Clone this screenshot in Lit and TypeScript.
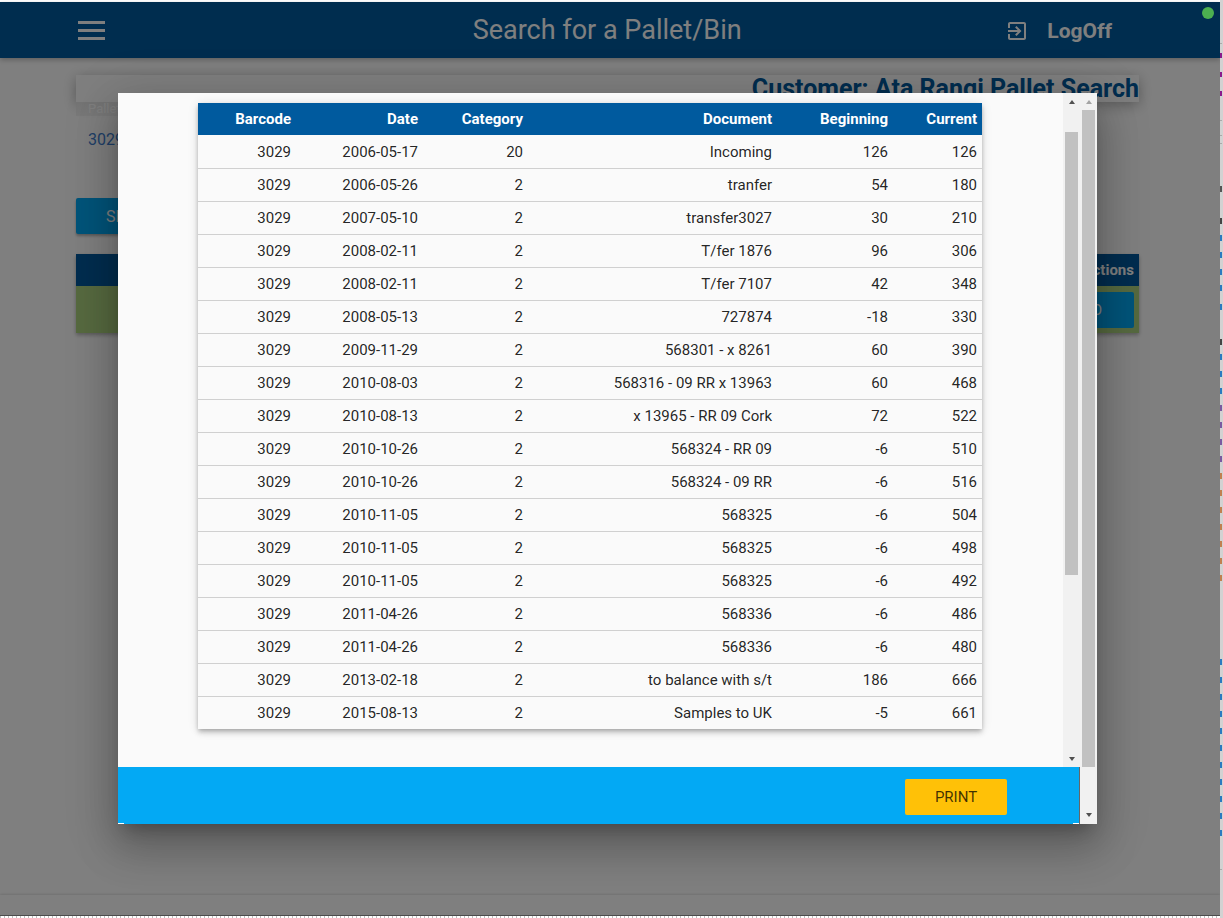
import { LitElement, html, css, svg } from "lit";
import { customElement } from "lit/decorators.js";

const ROWS: [string, string, string, string, string, string][] = [
  ["3029", "2006-05-17", "20", "Incoming", "126", "126"],
  ["3029", "2006-05-26", "2", "tranfer", "54", "180"],
  ["3029", "2007-05-10", "2", "transfer3027", "30", "210"],
  ["3029", "2008-02-11", "2", "T/fer 1876", "96", "306"],
  ["3029", "2008-02-11", "2", "T/fer 7107", "42", "348"],
  ["3029", "2008-05-13", "2", "727874", "-18", "330"],
  ["3029", "2009-11-29", "2", "568301 - x 8261", "60", "390"],
  ["3029", "2010-08-03", "2", "568316 - 09 RR x 13963", "60", "468"],
  ["3029", "2010-08-13", "2", "x 13965 - RR 09 Cork", "72", "522"],
  ["3029", "2010-10-26", "2", "568324 - RR 09", "-6", "510"],
  ["3029", "2010-10-26", "2", "568324 - 09 RR", "-6", "516"],
  ["3029", "2010-11-05", "2", "568325", "-6", "504"],
  ["3029", "2010-11-05", "2", "568325", "-6", "498"],
  ["3029", "2010-11-05", "2", "568325", "-6", "492"],
  ["3029", "2011-04-26", "2", "568336", "-6", "486"],
  ["3029", "2011-04-26", "2", "568336", "-6", "480"],
  ["3029", "2013-02-18", "2", "to balance with s/t", "186", "666"],
  ["3029", "2015-08-13", "2", "Samples to UK", "-5", "661"],
];
const HEAD = ["Barcode", "Date", "Category", "Document", "Beginning", "Current"];

const MARKS: [number, number, string][] = [
  [53, 5, "#8a1a8a"], [72, 5, "#8a1a8a"], [91, 5, "#8a1a8a"], [43, 1, "#aaaaaa"],
  [120, 1, "#aaaaaa"], [135, 1, "#aaaaaa"], [143, 1, "#aaaaaa"], [186, 6, "#555555"],
  [218, 6, "#444444"], [235, 6, "#2a7ac0"], [252, 6, "#2a7ac0"], [269, 6, "#2a7ac0"],
  [285, 6, "#2a7ac0"], [304, 6, "#2a7ac0"], [339, 6, "#444444"], [354, 6, "#2a7ac0"],
  [371, 6, "#2a7ac0"], [388, 6, "#2a7ac0"], [405, 6, "#7a5aa0"], [422, 6, "#7a5aa0"],
  [439, 6, "#7a5aa0"], [456, 6, "#7a5aa0"], [473, 6, "#c08050"], [490, 6, "#c08050"],
  [507, 6, "#c08050"], [524, 6, "#c08050"], [541, 6, "#c08050"], [558, 6, "#c08050"],
  [575, 6, "#c08050"], [659, 6, "#2a7ac0"], [677, 6, "#2a7ac0"], [694, 6, "#2a7ac0"],
  [711, 6, "#2a7ac0"], [728, 6, "#2a7ac0"], [745, 6, "#2a7ac0"], [762, 6, "#2a7ac0"],
  [779, 6, "#2a7ac0"], [796, 6, "#2a7ac0"], [813, 6, "#2a7ac0"], [830, 6, "#2a7ac0"],
  [869, 1, "#aaaaaa"],
];

const exitIcon = svg`<path d="M10.09 15.59L11.5 17l5-5-5-5-1.41 1.41L12.67 11H3v2h9.67l-2.58 2.59zM19 3H5c-1.11 0-2 .9-2 2v4h2V5h14v14H5v-4H3v4c0 1.1.89 2 2 2h14c1.1 0 2-.9 2-2V5c0-1.1-.9-2-2-2z"/>`;

@customElement("app-root")
export class AppRoot extends LitElement {
  static styles = css`
    :host {
      display: block;
      position: relative;
      height: 918px;
      overflow: hidden;
      background: #fff;
      font-family: Roboto, "Liberation Sans", sans-serif;
    }
    .page {
      width: 1220px;
      height: 918px;
      padding-top: 2px;
      box-sizing: border-box;
      display: flex;
      flex-direction: column;
      background: #fff;
    }
    .topbar {
      height: 56px;
      flex: none;
      background: #005a9e;
      color: #fff;
      display: flex;
      align-items: center;
      padding: 0 108px 0 78px;
      box-shadow: 0 2px 5px rgba(0, 0, 0, 0.25);
    }
    .burger {
      width: 27px;
      display: flex;
      flex-direction: column;
      gap: 5px;
    }
    .burger i {
      display: block;
      height: 3px;
      background: #fff;
    }
    .title {
      flex: 1;
      text-align: center;
      font-size: 27px;
      padding-left: 104px;
    }
    .logoff {
      display: flex;
      align-items: center;
      gap: 18px;
      font-size: 21px;
      font-weight: 700;
      padding-top: 1px;
    }
    .logoff svg {
      width: 24px;
      height: 24px;
      fill: #fff;
      display: block;
    }
    .content {
      flex: 1;
      padding: 17px 81px 0 76px;
    }
    .searchbar {
      height: 27px;
      background: #ffffff;
      box-shadow: 0 3px 14px rgba(0, 0, 0, 0.3);
      display: flex;
      justify-content: flex-end;
      align-items: center;
      font-size: 25px;
      font-weight: 700;
      color: #005a9e;
      white-space: nowrap;
    }
    .plabel {
      width: 60px;
      font-size: 13px;
      color: #fff;
      padding: 0 0 0 12px;
      line-height: 14px;
      background: linear-gradient(#e8e8e8, #f2f2f2);
    }
    .pval {
      font-size: 16px;
      color: #3f7fd0;
      padding: 0 12px;
      margin-top: 14px;
      line-height: 19px;
    }
    .showbtn {
      margin-top: 49px;
      width: 150px;
      height: 36px;
      border-radius: 2px;
      background: #03a9f4;
      color: #fff;
      font-size: 16px;
      display: flex;
      align-items: center;
      padding-left: 30px;
      box-sizing: border-box;
      box-shadow: 0 2px 3px rgba(0, 0, 0, 0.3);
    }
    .grid {
      margin-top: 20px;
      box-shadow: 0 2px 4px rgba(0, 0, 0, 0.3);
    }
    .ghead {
      height: 32px;
      background: #005a9e;
      color: #fff;
      font-size: 15px;
      font-weight: 700;
      display: flex;
      align-items: center;
      justify-content: flex-end;
      padding-right: 5px;
    }
    .gbody {
      height: 47px;
      background: #aed581;
      display: flex;
      align-items: center;
      justify-content: flex-end;
      padding-right: 5px;
    }
    .gbtn {
      width: 100px;
      height: 36px;
      border-radius: 2px;
      background: #03a9f4;
      color: #fff;
      font-size: 15px;
      display: flex;
      align-items: center;
      justify-content: flex-end;
      padding-right: 32px;
      box-sizing: border-box;
    }
    .pagefoot {
      height: 20px;
      flex: none;
      background: #fff;
      box-shadow: 0 -1px 2px rgba(0, 0, 0, 0.12);
      margin-bottom: 2px;
      border-bottom: 1px solid #999;
    }

    .overlay {
      position: absolute;
      left: 0;
      top: 2px;
      width: 1220px;
      height: 916px;
      background: rgba(0, 0, 0, 0.5);
      box-sizing: border-box;
      padding: 91px 0 0 118px;
    }
    .modal {
      width: 979px;
      height: 731px;
      display: flex;
      background: #f1f1f1;
      box-shadow: 0 11px 15px -7px rgba(0, 0, 0, 0.25),
        0 24px 38px 3px rgba(0, 0, 0, 0.18),
        0 9px 46px 8px rgba(0, 0, 0, 0.14);
    }
    .main {
      width: 962px;
      display: flex;
      flex-direction: column;
    }
    .body {
      height: 674px;
      flex: none;
      display: flex;
    }
    .scroller {
      flex: 1;
      background: #fafafa;
      padding: 10px 81px 0 80px;
    }
    table {
      width: 784px;
      table-layout: fixed;
      border-collapse: collapse;
      background: #fafafa;
      font-size: 15px;
      color: rgba(0, 0, 0, 0.87);
      box-shadow: 0 2px 4px -1px rgba(0, 0, 0, 0.2),
        0 4px 5px rgba(0, 0, 0, 0.14),
        0 1px 10px rgba(0, 0, 0, 0.12);
    }
    th,
    td {
      padding: 0 5px 0 0;
      text-align: right;
      white-space: nowrap;
      box-sizing: border-box;
    }
    th {
      height: 32px;
      background: #005a9e;
      color: #fff;
      font-weight: 700;
      border-bottom: 1px solid #fafafa;
    }
    td {
      height: 33px;
      border-bottom: 1px solid #d0d0d0;
    }
    tr:last-child td {
      border-bottom: none;
    }
    .c1 { width: 98px; }
    .c2 { width: 127px; }
    .c3 { width: 105px; }
    .c4 { width: 249px; }
    .c5 { width: 116px; }
    .c6 { width: 89px; }

    .sb {
      width: 17px;
      flex: none;
      background: #f1f1f1;
      display: flex;
      flex-direction: column;
      align-items: center;
    }
    .up,
    .down {
      width: 0;
      height: 0;
      flex: none;
      border-left: 3.5px solid transparent;
      border-right: 3.5px solid transparent;
    }
    .up {
      border-bottom: 4px solid #505050;
      margin-top: 7px;
    }
    .up.off {
      border-bottom-color: #a3a3a3;
    }
    .down {
      border-top: 4px solid #505050;
      margin-top: auto;
    }
    .thumb {
      width: 13px;
      flex: none;
      background: #c1c1c1;
    }
    .inner .thumb {
      height: 443px;
      margin-top: 28px;
    }
    .inner .down {
      margin-bottom: 6px;
    }
    .outer .thumb {
      height: 657px;
      margin-top: 6px;
    }
    .outer .down {
      margin-bottom: 7px;
    }
    .foot {
      position: relative;
      height: 57px;
      flex: none;
      background: #03a9f4;
      border-right: 1px solid #666;
      display: flex;
      justify-content: flex-end;
      padding: 12px 72px 0 0;
      box-sizing: border-box;
    }
    .foot::before,
    .foot::after {
      content: "";
      position: absolute;
      bottom: 0;
      width: 6px;
      height: 1px;
      background: #fff;
    }
    .foot::before {
      left: 0;
    }
    .foot::after {
      right: 0;
    }
    .print {
      width: 102px;
      height: 36px;
      border-radius: 2px;
      background: #ffc107;
      color: rgba(0, 0, 0, 0.75);
      font-size: 15px;
      display: flex;
      align-items: center;
      justify-content: center;
    }
    .dot {
      position: absolute;
      left: 1202px;
      top: 7px;
      width: 12px;
      height: 12px;
      border-radius: 50%;
      background: #4caf50;
    }
    .strip {
      position: absolute;
      right: 0;
      top: 0;
      width: 3px;
      height: 918px;
      background: #d2d2d2;
    }
    .strip i {
      position: absolute;
      left: 0;
      width: 2px;
    }
    .dots {
      position: absolute;
      left: 0;
      right: 3px;
      bottom: 0;
      height: 2px;
      background: repeating-linear-gradient(90deg, #bbb 0 1px, #fff 1px 4px);
    }
  `;

  render() {
    return html`
      <div class="page">
        <div class="topbar">
          <div class="burger"><i></i><i></i><i></i></div>
          <div class="title">Search for a Pallet/Bin</div>
          <div class="logoff">
            <svg viewBox="0 0 24 24">${exitIcon}</svg>
            <span>LogOff</span>
          </div>
        </div>
        <div class="content">
          <div class="searchbar">Customer: Ata Rangi Pallet Search</div>
          <div class="plabel">Pallet</div>
          <div class="pval">3029</div>
          <div class="showbtn">SEARCH</div>
          <div class="grid">
            <div class="ghead">Actions</div>
            <div class="gbody"><div class="gbtn">INFO</div></div>
          </div>
        </div>
        <div class="pagefoot"></div>
      </div>
      <div class="overlay">
        <div class="modal">
          <div class="main">
            <div class="body">
              <div class="scroller">
                <table>
                  <colgroup>
                    ${["c1", "c2", "c3", "c4", "c5", "c6"].map(
                      (c) => html`<col class=${c} />`
                    )}
                  </colgroup>
                  <thead>
                    <tr>${HEAD.map((h) => html`<th>${h}</th>`)}</tr>
                  </thead>
                  <tbody>
                    ${ROWS.map(
                      (r) => html`<tr>${r.map((v) => html`<td>${v}</td>`)}</tr>`
                    )}
                  </tbody>
                </table>
              </div>
              <div class="sb inner">
                <div class="up"></div>
                <div class="thumb"></div>
                <div class="down"></div>
              </div>
            </div>
            <div class="foot"><div class="print">PRINT</div></div>
          </div>
          <div class="sb outer">
            <div class="up off"></div>
            <div class="thumb"></div>
            <div class="down"></div>
          </div>
        </div>
      </div>
      <div class="dot"></div>
      <div class="strip">
        ${MARKS.map(
          ([y, h, c]) =>
            html`<i style="top:${y}px;height:${h}px;background:${c}"></i>`
        )}
      </div>
      <div class="dots"></div>
    `;
  }
}
